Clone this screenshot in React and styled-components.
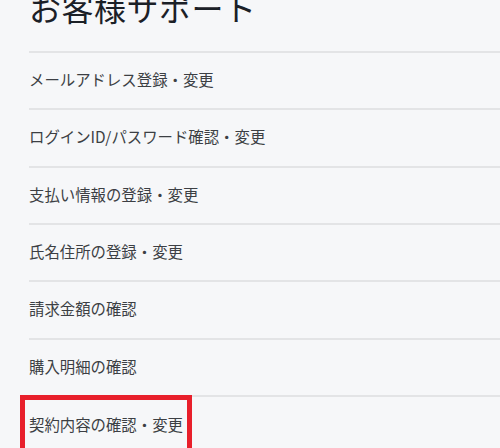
import styled, { createGlobalStyle } from 'styled-components';

const GlobalStyle = createGlobalStyle`
  html, body {
    margin: 0;
    padding: 0;
    background: #f6f7f9;
    overflow: hidden;
  }
  body {
    font-family: "Noto Sans CJK JP", "Noto Sans", sans-serif;
  }
`;

const Page = styled.div`
  padding-left: 29px;
  width: 500px;
  height: 448px;
  box-sizing: border-box;
  overflow: hidden;
`;

const Title = styled.h1`
  margin: -9px 0 28px;
  font-size: 32px;
  line-height: 32px;
  font-weight: 400;
  color: #1b2027;
  letter-spacing: 0.5px;
`;

const Menu = styled.ul`
  list-style: none;
  margin: 0;
  padding: 0;
`;

const Item = styled.li`
  box-sizing: border-box;
  height: 57.33px;
  padding-bottom: 3px;
  border-top: 2px solid #e3e4e6;
  display: flex;
  align-items: center;
`;

const Label = styled.span`
  font-size: 15.4px;
  line-height: 22px;
  color: #3c3f44;
  ${({ $marked }) =>
    $marked &&
    `
    margin-left: -9px;
    margin-top: 1px;
    padding: 13px 4px;
    border: 5px solid #e81f2b;
    background: #f6f7f9;
  `}
`;

const items = [
  'メールアドレス登録・変更',
  'ログインID/パスワード確認・変更',
  '支払い情報の登録・変更',
  '氏名住所の登録・変更',
  '請求金額の確認',
  '購入明細の確認',
  '契約内容の確認・変更',
];

export default function App() {
  return (
    <Page>
      <GlobalStyle />
      <Title>お客様サポート</Title>
      <Menu>
        {items.map((text, i) => (
          <Item key={text}>
            <Label $marked={i === items.length - 1}>{text}</Label>
          </Item>
        ))}
      </Menu>
    </Page>
  );
}
